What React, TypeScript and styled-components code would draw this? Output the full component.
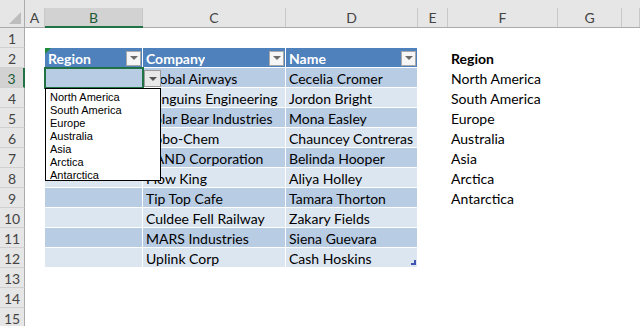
import React from "react";
import styled, { createGlobalStyle, css } from "styled-components";

const Global = createGlobalStyle`
  html, body { margin: 0; padding: 0; background: #ffffff; }
  body { width: 640px; height: 326px; overflow: hidden; }
`;

const FONT = `Lato, "Open Sans", sans-serif`;
const GREEN = "#217346";

const Sheet = styled.div`
  display: grid;
  grid-template-columns: 25px 20px 98px 143px 132px 30px 110px 64px 18px;
  grid-template-rows: 28px repeat(15, 20px);
  width: 640px;
  font-family: ${FONT};
  font-size: 14px;
  color: #000;
`;

const Corner = styled.div`
  position: relative;
  background: #e6e6e6;
  border-right: 1px solid #ababab;
  border-bottom: 1px solid #ababab;
  box-sizing: border-box;
  &::after {
    content: "";
    position: absolute;
    right: 3px;
    bottom: 3px;
    width: 0;
    height: 0;
    border-left: 12px solid transparent;
    border-bottom: 12px solid #bdbdbd;
  }
`;

const ColHead = styled.div<{ $active?: boolean }>`
  background: #e6e6e6;
  box-sizing: border-box;
  padding-top: 8px;
  border-bottom: 1px solid #ababab;
  display: flex;
  ${(p) =>
    p.$active &&
    css`
      border-bottom: 2px solid ${GREEN};
    `}
`;

const ColLabel = styled.div<{ $active?: boolean }>`
  flex: 1;
  box-sizing: border-box;
  border-right: 1px solid #c8c8c8;
  display: flex;
  align-items: center;
  justify-content: center;
  font-size: 14px;
  color: #444;
  background: ${(p) => (p.$active ? "#d2d2d2" : "transparent")};
  ${(p) => p.$active && css`color: #1e5a35;`}
`;

const RowHead = styled.div<{ $active?: boolean }>`
  box-sizing: border-box;
  background: ${(p) => (p.$active ? "#d2d2d2" : "#e6e6e6")};
  border-right: ${(p) => (p.$active ? `2px solid ${GREEN}` : "1px solid #ababab")};
  border-bottom: 1px solid #d0d0d0;
  display: flex;
  align-items: center;
  justify-content: center;
  font-size: 14px;
  color: ${(p) => (p.$active ? "#1e5a35" : "#444")};
  padding-top: 1px;
`;

type Kind = "none" | "head" | "odd" | "even";

const Cell = styled.div<{ $kind: Kind; $bold?: boolean }>`
  position: relative;
  box-sizing: border-box;
  display: flex;
  align-items: center;
  padding: 1px 3px 0 3px;
  white-space: nowrap;
  overflow: visible;
  font-weight: ${(p) => (p.$bold ? 700 : 400)};
  ${(p) =>
    p.$kind === "head" &&
    css`
      background: #4f81bd;
      color: #fff;
      font-weight: 700;
      justify-content: space-between;
      padding-right: 1px;
      border-right: 1px solid #fff;
      border-bottom: 1px solid #fff;
    `}
  ${(p) =>
    p.$kind === "odd" &&
    css`
      background: #b8cce4;
      border-right: 1px solid #fff;
      border-bottom: 1px solid #fff;
    `}
  ${(p) =>
    p.$kind === "even" &&
    css`
      background: #dce6f1;
      border-right: 1px solid #fff;
      border-bottom: 1px solid #fff;
    `}
`;

const Clip = styled.span`
  overflow: hidden;
`;

const FilterButton = styled.span`
  width: 15px;
  height: 15px;
  box-sizing: border-box;
  background: #f6f6f6;
  border: 1px solid #a9a9a9;
  display: flex;
  align-items: center;
  justify-content: center;
  flex-shrink: 0;
  &::after {
    content: "";
    border-left: 4px solid transparent;
    border-right: 4px solid transparent;
    border-top: 4px solid #6b6b6b;
  }
`;

const CommentMark = styled.span`
  position: absolute;
  left: 0;
  top: 0;
  width: 0;
  height: 0;
  border-top: 6px solid #1e8c3c;
  border-right: 6px solid transparent;
`;

const Selected = styled.div`
  position: absolute;
  left: -1px;
  top: -1px;
  width: 100px;
  height: 22px;
  box-sizing: border-box;
  border: 2px solid ${GREEN};
  z-index: 3;
`;

const DropButton = styled.div`
  position: absolute;
  left: 99px;
  top: 2px;
  width: 17px;
  height: 17px;
  box-sizing: border-box;
  background: #e8e8e8;
  border: 1px solid #9a9a9a;
  display: flex;
  align-items: center;
  justify-content: center;
  z-index: 4;
  &::after {
    content: "";
    border-left: 4px solid transparent;
    border-right: 4px solid transparent;
    border-top: 4px solid #555;
  }
`;

const DropList = styled.ul`
  position: absolute;
  left: 0;
  top: 20px;
  width: 116px;
  height: 93px;
  box-sizing: border-box;
  margin: 0;
  padding: 2px 0 0 4px;
  list-style: none;
  background: #fff;
  border: 1px solid #000;
  z-index: 5;
  font-family: "Liberation Sans", Arial, sans-serif;
  font-size: 11px;
  font-weight: 400;
  color: #000;
`;

const DropItem = styled.li`
  height: 13px;
  line-height: 13px;
`;

const ResizeHandle = styled.svg`
  position: absolute;
  right: 1px;
  bottom: 2px;
`;

const tableCols = ["Region", "Company", "Name"];
const companies = [
  "Global Airways",
  "Penguins Engineering",
  "Polar Bear Industries",
  "Robo-Chem",
  "RAND Corporation",
  "Flow King",
  "Tip Top Cafe",
  "Culdee Fell Railway",
  "MARS Industries",
  "Uplink Corp",
];
const names = [
  "Cecelia Cromer",
  "Jordon Bright",
  "Mona Easley",
  "Chauncey Contreras",
  "Belinda Hooper",
  "Aliya Holley",
  "Tamara Thorton",
  "Zakary Fields",
  "Siena Guevara",
  "Cash Hoskins",
];
const regions = ["North America", "South America", "Europe", "Australia", "Asia", "Arctica", "Antarctica"];
const letters = ["A", "B", "C", "D", "E", "F", "G", ""];

export default function App() {
  const rows: React.ReactNode[] = [];
  for (let r = 1; r <= 15; r++) {
    const cells: React.ReactNode[] = [];
    cells.push(
      <RowHead key={`h${r}`} $active={r === 3}>
        {r}
      </RowHead>
    );
    for (let c = 0; c < 8; c++) {
      const key = `${r}-${c}`;
      const inTable = r >= 2 && r <= 12 && c >= 1 && c <= 3;
      if (inTable) {
        const kind: Kind = r === 2 ? "head" : r % 2 === 1 ? "odd" : "even";
        if (r === 2) {
          cells.push(
            <Cell key={key} $kind={kind}>
              {c === 1 && <CommentMark />}
              <Clip>{tableCols[c - 1]}</Clip>
              <FilterButton />
            </Cell>
          );
        } else {
          const i = r - 3;
          const text = c === 2 ? companies[i] : c === 3 ? names[i] : "";
          cells.push(
            <Cell key={key} $kind={kind} style={r === 3 && c === 1 ? { zIndex: 3 } : undefined}>
              {text}
              {r === 3 && c === 1 && (
                <>
                  <Selected />
                  <DropButton />
                  <DropList>
                    {regions.map((g) => (
                      <DropItem key={g}>{g}</DropItem>
                    ))}
                  </DropList>
                </>
              )}
              {r === 12 && c === 3 && (
                <ResizeHandle width="5" height="5" viewBox="0 0 5 5">
                  <path d="M3 0h2v5H0V3h3z" fill="#4154b4" />
                </ResizeHandle>
              )}
            </Cell>
          );
        }
      } else if (c === 5 && r >= 2 && r <= 9) {
        cells.push(
          <Cell key={key} $kind="none" $bold={r === 2}>
            {r === 2 ? "Region" : regions[r - 3]}
          </Cell>
        );
      } else {
        cells.push(<Cell key={key} $kind="none" />);
      }
    }
    rows.push(<React.Fragment key={r}>{cells}</React.Fragment>);
  }

  return (
    <>
      <Global />
      <Sheet>
        <Corner />
        {letters.map((l, i) => (
          <ColHead key={i} $active={l === "B"}>
            <ColLabel $active={l === "B"}>{l}</ColLabel>
          </ColHead>
        ))}
        {rows}
      </Sheet>
    </>
  );
}
